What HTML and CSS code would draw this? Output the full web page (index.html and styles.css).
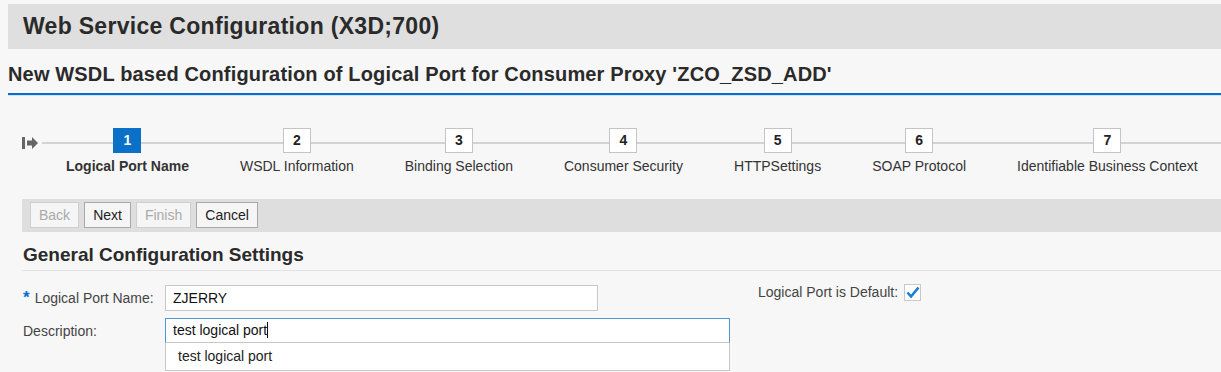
FILE: index.html
```html
<!DOCTYPE html>
<html lang="en">
<head>
    <meta charset="UTF-8">
    <title>Web Service Configuration</title>
    <link rel="stylesheet" href="styles.css">
</head>
<body>

    <div class="title-bar">Web Service Configuration (X3D;700)</div>

    <h2 class="page-title">New WSDL based Configuration of Logical Port for Consumer Proxy 'ZCO_ZSD_ADD'</h2>

    <!-- Шаги мастера -->
    <div class="roadmap">
        <svg class="roadmap-start" width="17" height="12" viewBox="0 0 17 12">
            <rect x="0" y="0" width="3" height="12" fill="#666"/>
            <path d="M5 3.5 H10 V0 L16 6 L10 12 V8.5 H5 Z" fill="#666"/>
        </svg>
        <div class="steps">
            <div class="step active"><span class="num">1</span><span class="label">Logical Port Name</span></div>
            <div class="step"><span class="num">2</span><span class="label">WSDL Information</span></div>
            <div class="step"><span class="num">3</span><span class="label">Binding Selection</span></div>
            <div class="step"><span class="num">4</span><span class="label">Consumer Security</span></div>
            <div class="step"><span class="num">5</span><span class="label">HTTPSettings</span></div>
            <div class="step"><span class="num">6</span><span class="label">SOAP Protocol</span></div>
            <div class="step"><span class="num">7</span><span class="label">Identifiable Business Context</span></div>
        </div>
    </div>

    <div class="toolbar">
        <button disabled>Back</button>
        <button>Next</button>
        <button disabled>Finish</button>
        <button>Cancel</button>
    </div>

    <h3 class="group-title">General Configuration Settings</h3>

    <div class="form">
        <div class="form-col">
            <div class="row">
                <label class="req"><span class="star">*</span>Logical Port Name:</label>
                <div class="field short">ZJERRY</div>
            </div>
            <div class="row">
                <label>Description:</label>
                <div class="combo">
                    <div class="field wide focus">test logical port<span class="caret"></span></div>
                    <div class="suggest">test logical port</div>
                </div>
            </div>
        </div>
        <div class="check-row">
            <span>Logical Port is Default:</span>
            <span class="checkbox">
                <svg width="14" height="13" viewBox="0 0 14 13">
                    <path d="M1.5 6.5 L5 10.5 L12.5 1.5" fill="none" stroke="#1b7fd6" stroke-width="2.6"/>
                </svg>
            </span>
        </div>
    </div>

</body>
</html>
```

FILE: styles.css
```css
body {
    margin: 0;
    padding: 4px 0 0 8px;
    background-color: #f7f7f7;
    font-family: "Liberation Sans", Arial, sans-serif;
    color: #333;
    overflow: hidden;
}
.title-bar {
    background-color: #dfdfdf;
    height: 45px;
    line-height: 45px;
    padding-left: 15px;
    font-size: 23px;
    letter-spacing: 0.3px;
    font-weight: bold;
    color: #2a2a2a;
}
.page-title {
    margin: 0;
    padding: 14px 0 0 0;
    height: 30px;
    font-size: 20px;
    letter-spacing: 0.16px;
    color: #2a2a2a;
    border-bottom: 2px solid #0a6ed1;
    box-shadow: 0 1px 0 #cfe3f5;
}
.roadmap {
    display: flex;
    align-items: flex-start;
    margin-top: 33px;
    position: relative;
}
.roadmap-start {
    margin: 9px 0 0 14px;
}
.roadmap::before {
    content: "";
    position: absolute;
    left: 34px;
    right: 0;
    top: 14px;
    height: 2px;
    background-color: #d3d3d3;
}
.steps {
    display: flex;
    gap: 51px;
    margin-left: 27px;
    position: relative;
}
.step {
    display: flex;
    flex-direction: column;
    align-items: center;
}
.num {
    width: 26px;
    height: 23px;
    line-height: 23px;
    text-align: center;
    background-color: #fff;
    border: 1px solid #c4c4c4;
    font-size: 14px;
    font-weight: bold;
    color: #222;
}
.label {
    margin-top: 5px;
    font-size: 14px;
    color: #333;
    white-space: nowrap;
}
.step.active .num {
    background-color: #0a70c8;
    border-color: #0a70c8;
    color: #fff;
}
.step.active .label {
    font-weight: bold;
}
.toolbar {
    display: flex;
    gap: 5px;
    margin: 25px 0 0 14px;
    padding: 3px 8px 4px;
    height: 26px;
    background-color: #dedede;
}
.toolbar button {
    height: 26px;
    padding: 0 8px;
    font-family: "Liberation Sans", Arial, sans-serif;
    font-size: 14px;
    color: #222;
    background-color: #f5f5f5;
    border: 1px solid #a9a9a9;
    border-radius: 0;
}
.toolbar button:disabled {
    color: #aaa;
    border-color: #cfcfcf;
}
.group-title {
    margin: 0 0 0 14px;
    padding: 12px 0 4px 1px;
    font-size: 19px;
    color: #2a2a2a;
    border-bottom: 1px solid #e3e3e3;
}
.form {
    display: flex;
    margin: 14px 0 0 15px;
}
.form-col {
    display: flex;
    flex-direction: column;
    gap: 7px;
}
.row {
    display: flex;
    align-items: flex-start;
}
.row label {
    width: 142px;
    font-size: 14px;
    color: #444;
    line-height: 26px;
}
.star {
    color: #0a6ed1;
    font-weight: bold;
    font-size: 17px;
    margin-right: 5px;
}
.field {
    box-sizing: border-box;
    height: 26px;
    line-height: 24px;
    padding-left: 7px;
    background-color: #fff;
    border: 1px solid #c8c8c8;
    font-size: 14px;
    color: #111;
}
.field.short {
    width: 433px;
}
.field.wide {
    width: 565px;
}
.field.focus {
    height: 25px;
    line-height: 23px;
    border-color: #4b97dc #4b97dc #c8c8c8 #4b97dc;
}
.caret {
    display: inline-block;
    width: 1px;
    height: 16px;
    background-color: #111;
    vertical-align: -3px;
}
.suggest {
    box-sizing: border-box;
    width: 565px;
    height: 28px;
    line-height: 26px;
    padding-left: 12px;
    background-color: #fff;
    border: 1px solid #c8c8c8;
    border-top: none;
    font-size: 14px;
    color: #222;
}
.check-row {
    display: flex;
    align-items: center;
    gap: 6px;
    margin: -3px 0 0 28px;
    height: 20px;
    font-size: 14px;
    color: #444;
}
.checkbox {
    box-sizing: border-box;
    width: 17px;
    height: 17px;
    background-color: #fff;
    border: 1px solid #c8c8c8;
    display: flex;
    align-items: center;
    justify-content: center;
}
```
